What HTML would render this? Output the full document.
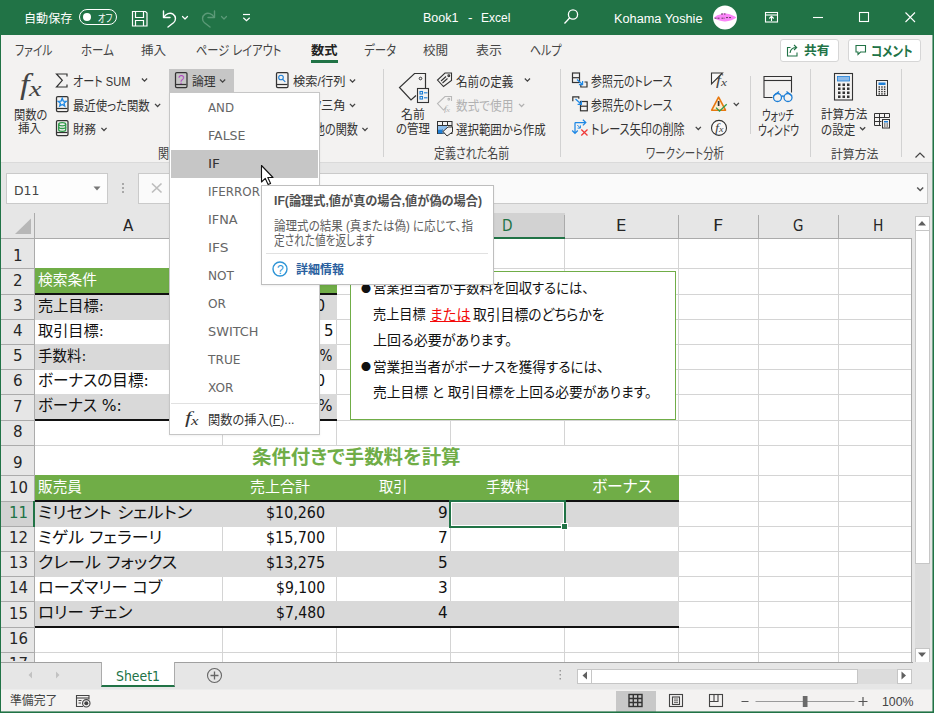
<!DOCTYPE html>
<html lang="ja"><head><meta charset="utf-8"><title>Book1 - Excel</title>
<style>
html,body{margin:0;padding:0}
body{width:934px;height:713px;position:relative;overflow:hidden;background:#e6e6e6;font-family:"Liberation Sans","Noto Sans CJK JP",sans-serif;font-size:12px;color:#262626}
.t{position:absolute;height:20px;line-height:20px;white-space:nowrap;font-feature-settings:"palt";font-kerning:normal}
.t span{display:inline-block;transform-origin:0 50%;white-space:nowrap}
.L{position:absolute;left:0;top:0;pointer-events:none;overflow:visible}
u{text-decoration:underline}
</style></head>
<body>
<div style="position:absolute;left:0px;top:0px;width:934px;height:35px;background:#217346;"></div>
<div style="position:absolute;left:0px;top:35px;width:934px;height:127px;background:#f3f2f1;"></div>
<div style="position:absolute;left:0px;top:162px;width:934px;height:1px;background:#dadada;"></div>
<div class="t" style="left:24.0px;top:8.8px;font-size:12.5px;color:#fff;font-family:'Liberation Sans','Noto Sans CJK JP',sans-serif;"><span id="t0" style="--w:48.30;transform:scaleX(0.9657)">自動保存</span></div>
<div style="position:absolute;left:79px;top:9px;width:36px;height:14px;border:1px solid #fff;border-radius:9px"></div>
<div style="position:absolute;left:83px;top:13px;width:8px;height:8px;border-radius:50%;background:#fff"></div>
<div class="t" style="left:98.0px;top:8.3px;font-size:10.64px;color:#fff;font-family:'Liberation Sans','Noto Sans CJK JP',sans-serif;"><span id="t1" style="--w:14.30;transform:scaleX(0.7665)">オフ</span></div>
<div class="t" style="left:423.3px;top:7.9px;font-size:12.5px;color:#fff;font-family:'Liberation Sans','Noto Sans CJK JP',sans-serif;"><span id="t2" style="--w:35.50;transform:scaleX(1.0013)">Book1</span></div>
<div class="t" style="left:468.3px;top:7.9px;font-size:12.5px;color:#fff;font-family:'Liberation Sans','Noto Sans CJK JP',sans-serif;"><span id="t3" style="--w:4.50;transform:scaleX(1.0787)">-</span></div>
<div class="t" style="left:480.5px;top:7.9px;font-size:12.5px;color:#fff;font-family:'Liberation Sans','Noto Sans CJK JP',sans-serif;"><span id="t4" style="--w:29.30;transform:scaleX(0.9582)">Excel</span></div>
<div class="t" style="left:613.5px;top:9.0px;font-size:12.5px;color:#fff;font-family:'Liberation Sans','Noto Sans CJK JP',sans-serif;"><span id="t5" style="--w:88.50;transform:scaleX(1.0185)">Kohama Yoshie</span></div>
<svg class="L" width="934" height="713" viewBox="0 0 934 713">
<g fill="none" stroke="#fff" stroke-width="1.2"><path d="M132.5 11.5h13l1.5 1.5v13h-14.5z"/><path d="M135.5 11.5v6h8v-6"/><path d="M135.5 26v-5.5h8v5.5"/></g>
<g fill="none" stroke="#fff" stroke-width="1.4" stroke-linecap="round" stroke-linejoin="round"><path d="M163.5 11v6.5h6.500"/><path d="M163.8 17.3c2-3.600 6.200-5.200 9.200-3.200 3.200 2.200 3.200 6.300 0.500 8.700l-5.500 4.200"/><path d="M182.5 16.500l2.500 2.500 2.500-2.500" stroke-width="1.2"/></g>
<g fill="none" stroke="#5c9a78" stroke-width="1.4" stroke-linecap="round" stroke-linejoin="round"><path d="M214.500 11v6.500h-6.500"/><path d="M214.200 17.300c-2-3.600-6.200-5.200-9.200-3.200-3.200 2.200-3.200 6.300-0.500 8.700l5.500 4.200"/><path d="M221.500 16.500l2.500 2.500 2.500-2.500" stroke-width="1.200"/></g>
<g fill="none" stroke="#fff" stroke-width="1.2"><path d="M243 14.500h7"/><path d="M243.300 17.800l3.200 3 3.200-3"/></g>
<g fill="none" stroke="#fff" stroke-width="1.3"><circle cx="573" cy="14.500" r="4.600"/><path d="M569.800 17.800l-5.300 5.700"/></g>
<circle cx="725" cy="17.500" r="12" fill="#fff"/><path d="M714 17.800c2-2.200 4.500-3.300 7-3.600 1.500-1.200 4.500-1.400 6.500-.4 3 .6 6.500 1.800 9 3.800-3 2.400-7.500 4-12 3.800-4-.2-8-1.600-10.500-3.600z" fill="#fb84f8"/><path d="M714.500 18.200h5.500m1.500 0h3.500m1-.6h5m-10-3.600h4.500" stroke="#333" stroke-width="0.800" stroke-dasharray="2 1"/>
<g fill="none" stroke="#fff" stroke-width="1.100"><rect x="765.500" y="12.500" width="12" height="9.500"/><path d="M765.500 15h12"/><path d="M771.500 21v-4.500m-2.200 2l2.200-2.200 2.200 2.200"/></g>
<g fill="none" stroke="#fff" stroke-width="1.100"><path d="M813 17.500h10"/><rect x="859.500" y="12.500" width="9" height="9"/><path d="M905.500 12.500l9.500 9.500m0-9.500l-9.500 9.500"/></g>
</svg>
<div class="t" style="left:14.5px;top:41.3px;font-size:13.44px;color:#444;font-family:'Liberation Sans','Noto Sans CJK JP',sans-serif;"><span id="t6" style="--w:37.50;transform:scaleX(0.8056)">ファイル</span></div>
<div class="t" style="left:80.7px;top:41.3px;font-size:13.44px;color:#444;font-family:'Liberation Sans','Noto Sans CJK JP',sans-serif;"><span id="t7" style="--w:32.90;transform:scaleX(0.8556)">ホーム</span></div>
<div class="t" style="left:141.4px;top:41.3px;font-size:12.0px;color:#444;font-family:'Liberation Sans','Noto Sans CJK JP',sans-serif;"><span id="t8" style="--w:25.10;transform:scaleX(1.0452)">挿入</span></div>
<div class="t" style="left:195.7px;top:41.3px;font-size:13.44px;color:#444;font-family:'Liberation Sans','Noto Sans CJK JP',sans-serif;"><span id="t9" style="--w:85.30;transform:scaleX(0.8349)">ページ レイアウト</span></div>
<div class="t" style="left:311.0px;top:40.8px;font-size:12.5px;color:#222;font-family:'Liberation Sans','Noto Sans CJK JP',sans-serif;font-weight:700;"><span id="t10" style="--w:26.50;transform:scaleX(1.0593)">数式</span></div>
<div style="position:absolute;left:311px;top:60px;width:27px;height:3px;background:#217346;"></div>
<div class="t" style="left:363.7px;top:41.3px;font-size:13.44px;color:#444;font-family:'Liberation Sans','Noto Sans CJK JP',sans-serif;"><span id="t11" style="--w:32.10;transform:scaleX(0.8546)">データ</span></div>
<div class="t" style="left:423.3px;top:41.3px;font-size:12.0px;color:#444;font-family:'Liberation Sans','Noto Sans CJK JP',sans-serif;"><span id="t12" style="--w:25.20;transform:scaleX(1.0493)">校閲</span></div>
<div class="t" style="left:476.0px;top:41.3px;font-size:12.0px;color:#444;font-family:'Liberation Sans','Noto Sans CJK JP',sans-serif;"><span id="t13" style="--w:26.00;transform:scaleX(1.0826)">表示</span></div>
<div class="t" style="left:529.5px;top:41.3px;font-size:13.44px;color:#444;font-family:'Liberation Sans','Noto Sans CJK JP',sans-serif;"><span id="t14" style="--w:31.50;transform:scaleX(0.8169)">ヘルプ</span></div>
<div style="position:absolute;left:780px;top:39px;width:57px;height:21px;background:#fff;border:1px solid #d6d6d6;border-radius:3px"></div>
<div style="position:absolute;left:848px;top:39px;width:71px;height:21px;background:#fff;border:1px solid #d6d6d6;border-radius:3px"></div>
<div class="t" style="left:803.5px;top:40.8px;font-size:12.5px;color:#217346;font-family:'Liberation Sans','Noto Sans CJK JP',sans-serif;font-weight:700;"><span id="t15" style="--w:25.50;transform:scaleX(1.0194)">共有</span></div>
<div class="t" style="left:870.5px;top:40.8px;font-size:14.0px;color:#217346;font-family:'Liberation Sans','Noto Sans CJK JP',sans-serif;font-weight:700;"><span id="t16" style="--w:41.50;transform:scaleX(0.8180)">コメント</span></div>
<svg class="L" width="934" height="713" viewBox="0 0 934 713">
<g fill="none" stroke="#217346" stroke-width="1.100"><path d="M790.500 47.500h-3v8.500h9.500v-3.500"/><path d="M790 53c.5-3.500 3-5.500 6.500-5.500m-2.500-2.500l2.700 2.500-2.700 2.500"/></g>
<g fill="none" stroke="#217346" stroke-width="1.100"><path d="M856 45.500h9.500v6.500h-5l-2.500 2.500v-2.500h-2z"/></g>
</svg>
<div class="t" style="left:19.5px;top:74.2px;font-size:30px;color:#444;font-family:'Liberation Serif','Noto Serif CJK SC',serif;font-style:italic;"><span id="t17" style="--w:9.50;transform:scaleX(1.1386)">f</span></div>
<div class="t" style="left:28.5px;top:78.8px;font-size:21px;color:#444;font-family:'Liberation Serif','Noto Serif CJK SC',serif;font-style:italic;"><span id="t18" style="--w:12.50;transform:scaleX(1.3400)">x</span></div>
<div class="t" style="left:13.5px;top:105.0px;font-size:13.0px;color:#333;font-family:'Liberation Sans','Noto Sans CJK JP',sans-serif;"><span id="t19" style="--w:33.30;transform:scaleX(0.8639)">関数の</span></div>
<div class="t" style="left:18.3px;top:119.4px;font-size:12.5px;color:#333;font-family:'Liberation Sans','Noto Sans CJK JP',sans-serif;"><span id="t20" style="--w:23.10;transform:scaleX(0.9234)">挿入</span></div>
<div class="t" style="left:73.2px;top:71.8px;font-size:13.25px;color:#333;font-family:'Liberation Sans','Noto Sans CJK JP',sans-serif;"><span id="t21" style="--w:57.40;transform:scaleX(0.8368)">オート SUM</span></div>
<div class="t" style="left:73.2px;top:96.2px;font-size:12.93px;color:#333;font-family:'Liberation Sans','Noto Sans CJK JP',sans-serif;"><span id="t22" style="--w:76.70;transform:scaleX(0.8792)">最近使った関数</span></div>
<div class="t" style="left:73.2px;top:120.2px;font-size:12.5px;color:#333;font-family:'Liberation Sans','Noto Sans CJK JP',sans-serif;"><span id="t23" style="--w:23.10;transform:scaleX(0.9234)">財務</span></div>
<div style="position:absolute;left:169px;top:69px;width:65px;height:23px;background:#c6c6c6;"></div>
<div class="t" style="left:191.8px;top:71.8px;font-size:12.5px;color:#333;font-family:'Liberation Sans','Noto Sans CJK JP',sans-serif;"><span id="t24" style="--w:23.70;transform:scaleX(0.9474)">論理</span></div>
<div class="t" style="left:292.5px;top:71.8px;font-size:12.5px;color:#333;font-family:'Liberation Sans','Noto Sans CJK JP',sans-serif;"><span id="t25" style="--w:52.50;transform:scaleX(0.9816)">検索/行列</span></div>
<div class="t" style="left:292.5px;top:96.2px;font-size:12.5px;color:#333;font-family:'Liberation Sans','Noto Sans CJK JP',sans-serif;"><span id="t26" style="--w:52.50;transform:scaleX(0.9816)">数学/三角</span></div>
<div class="t" style="left:292.5px;top:120.2px;font-size:13.25px;color:#333;font-family:'Liberation Sans','Noto Sans CJK JP',sans-serif;"><span id="t27" style="--w:65.00;transform:scaleX(0.8413)">その他の関数</span></div>
<div class="t" style="left:191.8px;top:96.2px;font-size:12.5px;color:#333;font-family:'Liberation Sans','Noto Sans CJK JP',sans-serif;"><span id="t28" style="--w:59.20;transform:scaleX(0.9470)">文字列操作</span></div>
<div class="t" style="left:191.8px;top:120.2px;font-size:12.5px;color:#333;font-family:'Liberation Sans','Noto Sans CJK JP',sans-serif;"><span id="t29" style="--w:52.20;transform:scaleX(0.9760)">日付/時刻</span></div>
<div class="t" style="left:158.0px;top:144.4px;font-size:13.57px;color:#444;font-family:'Liberation Sans','Noto Sans CJK JP',sans-serif;"><span id="t30" style="--w:70.00;transform:scaleX(0.8184)">関数ライブラリ</span></div>
<div class="t" style="left:400.8px;top:105.0px;font-size:12.5px;color:#333;font-family:'Liberation Sans','Noto Sans CJK JP',sans-serif;"><span id="t31" style="--w:23.90;transform:scaleX(0.9554)">名前</span></div>
<div class="t" style="left:395.8px;top:119.4px;font-size:13.0px;color:#333;font-family:'Liberation Sans','Noto Sans CJK JP',sans-serif;"><span id="t32" style="--w:33.90;transform:scaleX(0.8794)">の管理</span></div>
<div class="t" style="left:456.0px;top:71.8px;font-size:12.8px;color:#333;font-family:'Liberation Sans','Noto Sans CJK JP',sans-serif;"><span id="t33" style="--w:57.30;transform:scaleX(0.9019)">名前の定義</span></div>
<div class="t" style="left:456.0px;top:96.2px;font-size:12.8px;color:#b1b1b1;font-family:'Liberation Sans','Noto Sans CJK JP',sans-serif;"><span id="t34" style="--w:57.30;transform:scaleX(0.9093)">数式で使用</span></div>
<div class="t" style="left:456.0px;top:120.2px;font-size:12.88px;color:#333;font-family:'Liberation Sans','Noto Sans CJK JP',sans-serif;"><span id="t35" style="--w:89.70;transform:scaleX(0.8891)">選択範囲から作成</span></div>
<div class="t" style="left:434.3px;top:144.4px;font-size:13.14px;color:#444;font-family:'Liberation Sans','Noto Sans CJK JP',sans-serif;"><span id="t36" style="--w:75.20;transform:scaleX(0.8369)">定義された名前</span></div>
<div class="t" style="left:591.2px;top:71.8px;font-size:13.44px;color:#333;font-family:'Liberation Sans','Noto Sans CJK JP',sans-serif;"><span id="t37" style="--w:81.50;transform:scaleX(0.8141)">参照元のトレース</span></div>
<div class="t" style="left:591.2px;top:96.2px;font-size:13.44px;color:#333;font-family:'Liberation Sans','Noto Sans CJK JP',sans-serif;"><span id="t38" style="--w:81.50;transform:scaleX(0.8141)">参照先のトレース</span></div>
<div class="t" style="left:591.2px;top:120.2px;font-size:13.33px;color:#333;font-family:'Liberation Sans','Noto Sans CJK JP',sans-serif;"><span id="t39" style="--w:93.70;transform:scaleX(0.8321)">トレース矢印の削除</span></div>
<div class="t" style="left:645.7px;top:144.4px;font-size:13.63px;color:#444;font-family:'Liberation Sans','Noto Sans CJK JP',sans-serif;"><span id="t40" style="--w:78.10;transform:scaleX(0.7691)">ワークシート分析</span></div>
<div class="t" style="left:762.4px;top:105.0px;font-size:14.0px;color:#333;font-family:'Liberation Sans','Noto Sans CJK JP',sans-serif;"><span id="t41" style="--w:32.00;transform:scaleX(0.6755)">ウォッチ</span></div>
<div class="t" style="left:757.7px;top:119.5px;font-size:14.0px;color:#333;font-family:'Liberation Sans','Noto Sans CJK JP',sans-serif;"><span id="t42" style="--w:40.90;transform:scaleX(0.6867)">ウィンドウ</span></div>
<div class="t" style="left:820.6px;top:105.0px;font-size:12.5px;color:#333;font-family:'Liberation Sans','Noto Sans CJK JP',sans-serif;"><span id="t43" style="--w:46.50;transform:scaleX(0.9297)">計算方法</span></div>
<div class="t" style="left:821.0px;top:119.5px;font-size:13.0px;color:#333;font-family:'Liberation Sans','Noto Sans CJK JP',sans-serif;"><span id="t44" style="--w:34.30;transform:scaleX(0.8898)">の設定</span></div>
<div class="t" style="left:831.4px;top:144.5px;font-size:12.5px;color:#444;font-family:'Liberation Sans','Noto Sans CJK JP',sans-serif;"><span id="t45" style="--w:47.40;transform:scaleX(0.9477)">計算方法</span></div>
<div style="position:absolute;left:383px;top:69px;width:1px;height:88px;background:#d2d2d2;"></div>
<div style="position:absolute;left:560px;top:69px;width:1px;height:88px;background:#d2d2d2;"></div>
<div style="position:absolute;left:750px;top:76px;width:1px;height:58px;background:#d2d2d2;"></div>
<div style="position:absolute;left:809.5px;top:69px;width:1px;height:88px;background:#d2d2d2;"></div>
<div style="position:absolute;left:900.5px;top:69px;width:1px;height:88px;background:#d2d2d2;"></div>
<svg class="L" width="934" height="713" viewBox="0 0 934 713">
<path d="M141.9 78.5l2.600 2.600 2.600-2.600" fill="none" stroke="#444" stroke-width="1.250"/>
<path d="M155.0 103.9l2.600 2.600 2.600-2.600" fill="none" stroke="#444" stroke-width="1.250"/>
<path d="M101.4 127.9l2.600 2.600 2.600-2.600" fill="none" stroke="#444" stroke-width="1.250"/>
<path d="M220.0 79.5l2.600 2.600 2.600-2.600" fill="none" stroke="#444" stroke-width="1.250"/>
<path d="M349.9 79.5l2.600 2.600 2.600-2.600" fill="none" stroke="#444" stroke-width="1.250"/>
<path d="M349.9 103.9l2.600 2.600 2.600-2.600" fill="none" stroke="#444" stroke-width="1.250"/>
<path d="M362.4 127.9l2.600 2.600 2.600-2.600" fill="none" stroke="#444" stroke-width="1.250"/>
<path d="M524.8 78.5l2.600 2.600 2.600-2.600" fill="none" stroke="#444" stroke-width="1.250"/>
<path d="M695.7 126.9l2.600 2.600 2.600-2.600" fill="none" stroke="#444" stroke-width="1.250"/>
<path d="M733.7 102.9l2.600 2.600 2.600-2.600" fill="none" stroke="#444" stroke-width="1.250"/>
<path d="M860.0 127.2l2.600 2.600 2.600-2.600" fill="none" stroke="#444" stroke-width="1.250"/>
<path d="M519.0 103.9l2.600 2.600 2.600-2.600" fill="none" stroke="#b1b1b1" stroke-width="1.250"/>
<path d="M915.500 157.500l4.500-4.500 4.500 4.500" fill="none" stroke="#444" stroke-width="1.200"/>
<path d="M67 76.500v-2.500h-10.500l5.800 6.300-5.800 6.700h10.500v-2.500" fill="none" stroke="#333" stroke-width="1.200"/>
<rect x="56.5" y="96.5" width="11.500" height="15" rx="1.300" fill="none" stroke="#333" stroke-width="1.250"/><path d="M57.0 108.5h10.500" stroke="#333" stroke-width="1.200"/>
<path d="M62.20 98.30L63.32 101.06L66.29 101.27L64.01 103.19L64.73 106.08L62.20 104.50L59.67 106.08L60.39 103.19L58.11 101.27L61.08 101.06z" fill="none" stroke="#1e88e5" stroke-width="1.300"/>
<rect x="56.5" y="120.5" width="11.500" height="15" rx="1.300" fill="none" stroke="#333" stroke-width="1.250"/><path d="M57.0 132.5h10.500" stroke="#333" stroke-width="1.200"/>
<g fill="none" stroke="#2f9a4a" stroke-width="1.300"><ellipse cx="62.200" cy="124.200" rx="3.500" ry="1.600"/><path d="M58.700 124.200v5.600c0 2.100 7 2.100 7 0v-5.600"/><path d="M58.700 127c0 2 7 2 7 0"/></g>
<rect x="175.5" y="72.5" width="11.500" height="15" rx="1.300" fill="none" stroke="#333" stroke-width="1.250"/><path d="M176.0 84.5h10.500" stroke="#333" stroke-width="1.200"/>
<rect x="276.5" y="72.5" width="11.500" height="15" rx="1.300" fill="none" stroke="#333" stroke-width="1.250"/><path d="M277.0 84.5h10.500" stroke="#333" stroke-width="1.200"/>
<g fill="none" stroke="#1e7fd6" stroke-width="1.100"><circle cx="281" cy="77.500" r="2.300"/><path d="M282.700 79.300l2.600 2.600"/></g>
<rect x="175.5" y="96.5" width="11.500" height="15" rx="1.300" fill="none" stroke="#333" stroke-width="1.250"/><path d="M176.0 108.5h10.500" stroke="#333" stroke-width="1.200"/>
<rect x="175.5" y="120.5" width="11.500" height="15" rx="1.300" fill="none" stroke="#333" stroke-width="1.250"/><path d="M176.0 132.5h10.500" stroke="#333" stroke-width="1.200"/>
<rect x="276.5" y="96.5" width="11.500" height="15" rx="1.300" fill="none" stroke="#333" stroke-width="1.250"/><path d="M277.0 108.5h10.500" stroke="#333" stroke-width="1.200"/>
<rect x="276.5" y="120.5" width="11.500" height="15" rx="1.300" fill="none" stroke="#333" stroke-width="1.250"/><path d="M277.0 132.5h10.500" stroke="#333" stroke-width="1.200"/>
</svg>
<div class="t" style="left:178.0px;top:69.8px;font-size:13.0px;color:#b146c2;font-family:'Liberation Sans','Noto Sans CJK JP',sans-serif;"><span id="t46" style="--w:6.50;transform:scaleX(0.8985)">?</span></div>
<svg class="L" width="934" height="713" viewBox="0 0 934 713">
<path d="M425.500 96v-22.500h-11l-15 14 11.500 12.500 5-4.500" fill="none" stroke="#333" stroke-width="1.200"/><circle cx="420.500" cy="78.500" r="1.300" fill="none" stroke="#333" stroke-width="1"/>
<rect x="417.500" y="88.500" width="11" height="14" fill="#f3f2f1" stroke="#333" stroke-width="1.100"/>
<g fill="none" stroke="#1e7fd6" stroke-width="1.100"><rect x="420" y="91.500" width="2.500" height="2.500"/><path d="M424 92.800h3.500"/><rect x="420" y="96.500" width="2.500" height="2.500"/><path d="M424 97.800h3.500"/></g>
<g fill="none" stroke="#333" stroke-width="1.100"><path d="M451.500 80.500v-7.500h-6.500l-7.500 7 6 6.500z"/><circle cx="448.800" cy="75.800" r="0.900"/><path d="M441 81l5-4.500m-3.500 6.500l5-4.500"/></g>
<g fill="none" stroke="#b8b8b8" stroke-width="1.100"><path d="M451.500 101v-4.500h-6.500l-7.500 7 6 6.500 2.500-2.300"/><circle cx="448.800" cy="99.300" r="0.900"/></g>
<g fill="none" stroke="#333" stroke-width="1"><rect x="437.500" y="121.500" width="14.500" height="12"/><path d="M437.500 125.500h14.500m-9.500-4v12m5-12v4"/></g><rect x="438" y="126" width="9" height="3.500" fill="#8dbdeb"/><rect x="438" y="129.500" width="4.500" height="4" fill="#1e7fd6"/><rect x="442.500" y="129.500" width="4.500" height="4" fill="#8dbdeb"/>
<path d="M452.500 132v-5h-4.500l-5 4.500 4 4.500z" fill="#f3f2f1" stroke="#333" stroke-width="1"/>
<g fill="none" stroke="#333" stroke-width="1.200"><rect x="572.500" y="73" width="7" height="9.500"/><path d="M572.500 77.700h7"/><path d="M580.800 85v2h6.200v-5h-2.500"/></g><g fill="none" stroke="#1e88e5" stroke-width="1.200"><path d="M577 79.500l5.500 5m-3.600.2h3.700v-3.600"/></g>
<g fill="none" stroke="#333" stroke-width="1.200"><rect x="580.500" y="101.500" width="6.800" height="9.300"/><path d="M580.500 106.200h6.800"/><path d="M572.800 101.300v-4.500h6v2"/></g><g fill="none" stroke="#1e88e5" stroke-width="1.200"><path d="M575.500 99l5.800 5.200m-3.700.2h3.800v-3.600"/></g>
<g fill="none" stroke="#1e88e5" stroke-width="1.250"><path d="M575 122.600v10.700m-2.800-2.800l2.800 2.900 2.800-2.900"/><path d="M575 122.600h10.700m-2.800-2.800l2.900 2.800-2.900 2.800"/><path d="M577.300 125l3 3m-2.700.1h2.800v-2.700" stroke-width="1"/></g><path d="M581.300 129.500l6.200 6m0-6l-6.200 6" stroke="#f03a3a" stroke-width="1.300" fill="none"/>
<path d="M711.500 84v-11h11z" fill="#fafafa" stroke="#333" stroke-width="1.100"/>
<path d="M718.600 97.200l6.900 13h-13.800z" fill="#fdebd0" stroke="#e8780e" stroke-width="1.600" stroke-linejoin="round"/><path d="M718.600 101v5" stroke="#333" stroke-width="1.700"/><path d="M716 107.600l3.500 3.500 7.200-6.800" fill="none" stroke="#2f9a4a" stroke-width="1.300"/>
<circle cx="719" cy="127.900" r="7.500" fill="#fafafa" stroke="#333" stroke-width="1.100"/>
<path d="M772.500 97.500h-8.500v-21h27.500v16" fill="none" stroke="#333" stroke-width="1.100"/><path d="M764 80.500h27.500" stroke="#333" stroke-width="1.100"/>
<g fill="none" stroke="#1e7fd6" stroke-width="1.300"><circle cx="777.500" cy="97.500" r="4"/><circle cx="788" cy="97.500" r="4"/><path d="M781.500 96.500q1.300-1 2.500 0M773.500 96l5.500-4.500m13 4.500l-5.500-4.500"/></g>
<rect x="834.500" y="73.500" width="18" height="26.500" fill="none" stroke="#333" stroke-width="1.100"/><rect x="837.500" y="76.500" width="12" height="4.500" fill="#8ebbe8" stroke="#1e7fd6" stroke-width=".8"/>
<rect x="838.0" y="83.5" width="2.500" height="2.500" fill="#333"/>
<rect x="842.5" y="83.5" width="2.500" height="2.500" fill="#333"/>
<rect x="847.0" y="83.5" width="2.500" height="2.500" fill="#333"/>
<rect x="838.0" y="87.5" width="2.500" height="2.500" fill="#333"/>
<rect x="842.5" y="87.5" width="2.500" height="2.500" fill="#333"/>
<rect x="847.0" y="87.5" width="2.500" height="2.500" fill="#333"/>
<rect x="838.0" y="91.5" width="2.500" height="2.500" fill="#333"/>
<rect x="842.5" y="91.5" width="2.500" height="2.500" fill="#333"/>
<rect x="847.0" y="91.5" width="2.500" height="2.500" fill="#333"/>
<rect x="838.0" y="95.5" width="2.500" height="2.500" fill="#333"/>
<rect x="842.5" y="95.5" width="2.500" height="2.500" fill="#333"/>
<rect x="847.0" y="95.5" width="2.500" height="2.500" fill="#333"/>
<rect x="876.500" y="80.500" width="11" height="15" fill="none" stroke="#333" stroke-width="1"/><rect x="878.500" y="82.500" width="7" height="2.500" fill="#1e7fd6"/>
<rect x="878.5" y="86.3" width="1.500" height="1.400" fill="#333"/>
<rect x="881.2" y="86.3" width="1.500" height="1.400" fill="#333"/>
<rect x="883.9" y="86.3" width="1.500" height="1.400" fill="#333"/>
<rect x="878.5" y="88.6" width="1.500" height="1.400" fill="#333"/>
<rect x="881.2" y="88.6" width="1.500" height="1.400" fill="#333"/>
<rect x="883.9" y="88.6" width="1.500" height="1.400" fill="#333"/>
<rect x="878.5" y="90.9" width="1.500" height="1.400" fill="#333"/>
<rect x="881.2" y="90.9" width="1.500" height="1.400" fill="#333"/>
<rect x="883.9" y="90.9" width="1.500" height="1.400" fill="#333"/>
<rect x="878.5" y="93.2" width="1.500" height="1.400" fill="#333"/>
<rect x="881.2" y="93.2" width="1.500" height="1.400" fill="#333"/>
<rect x="883.9" y="93.2" width="1.500" height="1.400" fill="#333"/>
<g fill="none" stroke="#333" stroke-width="1"><path d="M881 125.500h-6.500v-12h15v4"/><path d="M874.500 117.500h15m-15 4h7m-2-8v12m5-12v4"/><rect x="882.500" y="119.500" width="7" height="8.500" fill="#f3f2f1"/></g><rect x="884" y="121" width="4" height="1.500" fill="#1e7fd6"/><path d="M884 124h4m-4 2h4" stroke="#333" stroke-width="1" stroke-dasharray="1 .5"/>
</svg>
<div class="t" style="left:716.3px;top:70.3px;font-size:15px;color:#444;font-family:'Liberation Serif','Noto Serif CJK SC',serif;font-style:italic;"><span id="t47" style="--w:5.00;transform:scaleX(1.1985)">f</span></div>
<div class="t" style="left:721.0px;top:72.5px;font-size:10.5px;color:#444;font-family:'Liberation Serif','Noto Serif CJK SC',serif;font-style:italic;"><span id="t48" style="--w:6.00;transform:scaleX(1.2843)">x</span></div>
<div class="t" style="left:715.3px;top:117.6px;font-size:11.5px;color:#444;font-family:'Liberation Serif','Noto Serif CJK SC',serif;font-style:italic;"><span id="t49" style="--w:4.00;transform:scaleX(1.2488)">f</span></div>
<div class="t" style="left:718.8px;top:119.3px;font-size:8.5px;color:#444;font-family:'Liberation Serif','Noto Serif CJK SC',serif;font-style:italic;"><span id="t50" style="--w:4.50;transform:scaleX(1.1901)">x</span></div>
<div class="t" style="left:443.5px;top:99.0px;font-size:8px;color:#b8b8b8;font-family:'Liberation Serif','Noto Serif CJK SC',serif;font-style:italic;"><span id="t51" style="--w:3.00;transform:scaleX(1.3427)">f</span></div>
<div class="t" style="left:446.0px;top:100.0px;font-size:7px;color:#b8b8b8;font-family:'Liberation Serif','Noto Serif CJK SC',serif;font-style:italic;"><span id="t52" style="--w:4.00;transform:scaleX(1.2864)">x</span></div>
<div style="position:absolute;left:6px;top:173px;width:100px;height:29px;background:#fdfdfd;border:1px solid #cacaca"></div>
<div style="position:absolute;left:138px;top:173px;width:788px;height:29px;background:#fafafa;border:1px solid #cacaca"></div>
<div class="t" style="left:13.5px;top:181.0px;font-size:13.12px;color:#444;font-family:'DejaVu Sans','Noto Sans CJK JP',sans-serif;"><span id="t53" style="--w:25.50;transform:scaleX(0.9522)">D11</span></div>
<svg class="L" width="934" height="713" viewBox="0 0 934 713">
<path d="M93.500 186.500h7l-3.500 4z" fill="#777"/>
<g fill="#a8a8a8"><rect x="122" y="183" width="2" height="2"/><rect x="122" y="187" width="2" height="2"/><rect x="122" y="191" width="2" height="2"/></g>
<path d="M152 183.500l9.500 9m0-9l-9.500 9" stroke="#bdbdbd" stroke-width="1.700" fill="none"/>
<path d="M176 188.500l3.500 3.500 6-8" stroke="#b9b9b9" stroke-width="1.500" fill="none"/>
<path d="M917.200 187.500l3 3 3-3" stroke="#555" stroke-width="1.500" fill="none"/>
</svg>
<div class="t" style="left:200.0px;top:179.0px;font-size:15px;color:#666;font-family:'Liberation Serif','Noto Serif CJK SC',serif;font-style:italic;"><span id="t54" style="--w:5.00;transform:scaleX(1.1985)">f</span></div>
<div class="t" style="left:205.0px;top:181.0px;font-size:11px;color:#666;font-family:'Liberation Serif','Noto Serif CJK SC',serif;font-style:italic;"><span id="t55" style="--w:6.00;transform:scaleX(1.2268)">x</span></div>
<div style="position:absolute;left:1px;top:213px;width:911px;height:449px;background:#e6e6e6;"></div>
<div style="position:absolute;left:35px;top:239px;width:877px;height:423px;background:#fff;"></div>
<div style="position:absolute;left:35px;top:269px;width:302px;height:25px;background:#70ad47;"></div>
<div style="position:absolute;left:35px;top:295px;width:302px;height:25px;background:#d9d9d9;"></div>
<div style="position:absolute;left:35px;top:345px;width:302px;height:25px;background:#d9d9d9;"></div>
<div style="position:absolute;left:35px;top:395px;width:302px;height:26px;background:#d9d9d9;"></div>
<div style="position:absolute;left:35px;top:476px;width:644px;height:25px;background:#70ad47;"></div>
<div style="position:absolute;left:35px;top:502px;width:644px;height:25px;background:#d9d9d9;"></div>
<div style="position:absolute;left:35px;top:552px;width:644px;height:25px;background:#d9d9d9;"></div>
<div style="position:absolute;left:35px;top:602px;width:644px;height:26px;background:#d9d9d9;"></div>
<div style="position:absolute;left:451px;top:213px;width:114px;height:25px;background:#d2d2d2;"></div>
<div style="position:absolute;left:1px;top:502px;width:33px;height:24px;background:#d2d2d2;"></div>
<svg class="L" width="934" height="713" viewBox="0 0 934 713">
<rect x="35" y="268" width="877" height="1" fill="#d4d4d4"/><rect x="35" y="294" width="877" height="1" fill="#d4d4d4"/><rect x="35" y="319" width="877" height="1" fill="#d4d4d4"/><rect x="35" y="344" width="877" height="1" fill="#d4d4d4"/><rect x="35" y="369" width="877" height="1" fill="#d4d4d4"/><rect x="35" y="394" width="877" height="1" fill="#d4d4d4"/><rect x="35" y="420" width="877" height="1" fill="#d4d4d4"/><rect x="35" y="445" width="877" height="1" fill="#d4d4d4"/><rect x="35" y="475" width="877" height="1" fill="#d4d4d4"/><rect x="35" y="501" width="877" height="1" fill="#d4d4d4"/><rect x="35" y="526" width="877" height="1" fill="#d4d4d4"/><rect x="35" y="551" width="877" height="1" fill="#d4d4d4"/><rect x="35" y="576" width="877" height="1" fill="#d4d4d4"/><rect x="35" y="601" width="877" height="1" fill="#d4d4d4"/><rect x="35" y="627" width="877" height="1" fill="#d4d4d4"/><rect x="35" y="652" width="877" height="1" fill="#d4d4d4"/><rect x="222" y="239" width="1" height="423" fill="#d4d4d4"/><rect x="336" y="239" width="1" height="423" fill="#d4d4d4"/><rect x="450" y="239" width="1" height="423" fill="#d4d4d4"/><rect x="564" y="239" width="1" height="423" fill="#d4d4d4"/><rect x="678" y="239" width="1" height="423" fill="#d4d4d4"/><rect x="758" y="239" width="1" height="423" fill="#d4d4d4"/><rect x="838" y="239" width="1" height="423" fill="#d4d4d4"/>
</svg>
<div style="position:absolute;left:35px;top:268px;width:302px;height:26px;background:#70ad47;"></div>
<div style="position:absolute;left:35px;top:294px;width:302px;height:26px;background:#d9d9d9;"></div>
<div style="position:absolute;left:35px;top:344px;width:302px;height:26px;background:#d9d9d9;"></div>
<div style="position:absolute;left:35px;top:394px;width:302px;height:27px;background:#d9d9d9;"></div>
<div style="position:absolute;left:35px;top:475px;width:644px;height:26px;background:#70ad47;"></div>
<div style="position:absolute;left:35px;top:501px;width:644px;height:26px;background:#d9d9d9;"></div>
<div style="position:absolute;left:35px;top:551px;width:644px;height:26px;background:#d9d9d9;"></div>
<div style="position:absolute;left:35px;top:601px;width:644px;height:27px;background:#d9d9d9;"></div>
<svg class="L" width="934" height="713" viewBox="0 0 934 713">
<rect x="1" y="238" width="911" height="1" fill="#ababab"/><rect x="34" y="213" width="1" height="449" fill="#ababab"/><rect x="222" y="215" width="1" height="23" fill="#ababab"/><rect x="336" y="215" width="1" height="23" fill="#ababab"/><rect x="450" y="215" width="1" height="23" fill="#ababab"/><rect x="564" y="215" width="1" height="23" fill="#ababab"/><rect x="678" y="215" width="1" height="23" fill="#ababab"/><rect x="758" y="215" width="1" height="23" fill="#ababab"/><rect x="838" y="215" width="1" height="23" fill="#ababab"/><rect x="1" y="268" width="33" height="1" fill="#ababab"/><rect x="1" y="294" width="33" height="1" fill="#ababab"/><rect x="1" y="319" width="33" height="1" fill="#ababab"/><rect x="1" y="344" width="33" height="1" fill="#ababab"/><rect x="1" y="369" width="33" height="1" fill="#ababab"/><rect x="1" y="394" width="33" height="1" fill="#ababab"/><rect x="1" y="420" width="33" height="1" fill="#ababab"/><rect x="1" y="445" width="33" height="1" fill="#ababab"/><rect x="1" y="475" width="33" height="1" fill="#ababab"/><rect x="1" y="501" width="33" height="1" fill="#ababab"/><rect x="1" y="526" width="33" height="1" fill="#ababab"/><rect x="1" y="551" width="33" height="1" fill="#ababab"/><rect x="1" y="576" width="33" height="1" fill="#ababab"/><rect x="1" y="601" width="33" height="1" fill="#ababab"/><rect x="1" y="627" width="33" height="1" fill="#ababab"/><rect x="1" y="652" width="33" height="1" fill="#ababab"/><rect x="911" y="239" width="1" height="423" fill="#ababab"/><path d="M31 218.500v15.500h-16z" fill="#b7b7b7"/><rect x="35" y="293" width="302" height="2" fill="#111"/><rect x="35" y="419" width="302" height="2" fill="#111"/><rect x="35" y="500" width="644" height="2" fill="#111"/><rect x="35" y="626" width="644" height="2" fill="#111"/><rect x="451" y="237" width="114" height="2" fill="#217346"/><rect x="33" y="501" width="2" height="26" fill="#217346"/><rect x="450" y="501" width="115" height="26" fill="none" stroke="#217346" stroke-width="2"/><rect x="451.500" y="502.500" width="112" height="23" fill="none" stroke="#fff" stroke-width="1"/><rect x="561.500" y="523.500" width="6" height="6" fill="#217346" stroke="#fff" stroke-width="1"/>
</svg>
<div class="t" style="left:123.3px;top:215.7px;font-size:15.23px;color:#262626;font-family:'DejaVu Sans','Noto Sans CJK JP',sans-serif;"><span id="t56" style="--w:10.40;transform:scaleX(0.9979)">A</span></div>
<div class="t" style="left:616.3px;top:215.7px;font-size:15.23px;color:#262626;font-family:'DejaVu Sans','Noto Sans CJK JP',sans-serif;"><span id="t57" style="--w:10.40;transform:scaleX(1.0805)">E</span></div>
<div class="t" style="left:713.3px;top:215.7px;font-size:15.23px;color:#262626;font-family:'DejaVu Sans','Noto Sans CJK JP',sans-serif;"><span id="t58" style="--w:10.40;transform:scaleX(1.1865)">F</span></div>
<div class="t" style="left:793.3px;top:215.7px;font-size:15.23px;color:#262626;font-family:'DejaVu Sans','Noto Sans CJK JP',sans-serif;"><span id="t59" style="--w:10.40;transform:scaleX(0.8816)">G</span></div>
<div class="t" style="left:872.8px;top:215.7px;font-size:15.23px;color:#262626;font-family:'DejaVu Sans','Noto Sans CJK JP',sans-serif;"><span id="t60" style="--w:10.40;transform:scaleX(0.9080)">H</span></div>
<div class="t" style="left:502.0px;top:215.7px;font-size:15.23px;color:#217346;font-family:'DejaVu Sans','Noto Sans CJK JP',sans-serif;"><span id="t61" style="--w:10.50;transform:scaleX(0.8960)">D</span></div>
<div class="t" style="left:12.7px;top:246.2px;font-size:15.23px;color:#262626;font-family:'DejaVu Sans','Noto Sans CJK JP',sans-serif;"><span id="t62" style="--w:9.60;transform:scaleX(0.9910)">1</span></div>
<div class="t" style="left:12.7px;top:270.7px;font-size:15.23px;color:#262626;font-family:'DejaVu Sans','Noto Sans CJK JP',sans-serif;"><span id="t63" style="--w:9.60;transform:scaleX(0.9910)">2</span></div>
<div class="t" style="left:12.7px;top:296.2px;font-size:15.23px;color:#262626;font-family:'DejaVu Sans','Noto Sans CJK JP',sans-serif;"><span id="t64" style="--w:9.60;transform:scaleX(0.9910)">3</span></div>
<div class="t" style="left:12.7px;top:321.2px;font-size:15.23px;color:#262626;font-family:'DejaVu Sans','Noto Sans CJK JP',sans-serif;"><span id="t65" style="--w:9.60;transform:scaleX(0.9910)">4</span></div>
<div class="t" style="left:12.7px;top:346.2px;font-size:15.23px;color:#262626;font-family:'DejaVu Sans','Noto Sans CJK JP',sans-serif;"><span id="t66" style="--w:9.60;transform:scaleX(0.9910)">5</span></div>
<div class="t" style="left:12.7px;top:371.2px;font-size:15.23px;color:#262626;font-family:'DejaVu Sans','Noto Sans CJK JP',sans-serif;"><span id="t67" style="--w:9.60;transform:scaleX(0.9910)">6</span></div>
<div class="t" style="left:12.7px;top:396.7px;font-size:15.23px;color:#262626;font-family:'DejaVu Sans','Noto Sans CJK JP',sans-serif;"><span id="t68" style="--w:9.60;transform:scaleX(0.9910)">7</span></div>
<div class="t" style="left:12.7px;top:422.2px;font-size:15.23px;color:#262626;font-family:'DejaVu Sans','Noto Sans CJK JP',sans-serif;"><span id="t69" style="--w:9.60;transform:scaleX(0.9910)">8</span></div>
<div class="t" style="left:12.7px;top:452.7px;font-size:15.23px;color:#262626;font-family:'DejaVu Sans','Noto Sans CJK JP',sans-serif;"><span id="t70" style="--w:9.60;transform:scaleX(0.9910)">9</span></div>
<div class="t" style="left:8.6px;top:477.7px;font-size:15.23px;color:#262626;font-family:'DejaVu Sans','Noto Sans CJK JP',sans-serif;"><span id="t71" style="--w:19.00;transform:scaleX(0.9806)">10</span></div>
<div class="t" style="left:8.6px;top:503.2px;font-size:15.23px;color:#217346;font-family:'DejaVu Sans','Noto Sans CJK JP',sans-serif;"><span id="t72" style="--w:19.00;transform:scaleX(0.9806)">11</span></div>
<div class="t" style="left:8.6px;top:528.2px;font-size:15.23px;color:#262626;font-family:'DejaVu Sans','Noto Sans CJK JP',sans-serif;"><span id="t73" style="--w:19.00;transform:scaleX(0.9806)">12</span></div>
<div class="t" style="left:8.6px;top:553.2px;font-size:15.23px;color:#262626;font-family:'DejaVu Sans','Noto Sans CJK JP',sans-serif;"><span id="t74" style="--w:19.00;transform:scaleX(0.9806)">13</span></div>
<div class="t" style="left:8.6px;top:578.2px;font-size:15.23px;color:#262626;font-family:'DejaVu Sans','Noto Sans CJK JP',sans-serif;"><span id="t75" style="--w:19.00;transform:scaleX(0.9806)">14</span></div>
<div class="t" style="left:8.6px;top:603.7px;font-size:15.23px;color:#262626;font-family:'DejaVu Sans','Noto Sans CJK JP',sans-serif;"><span id="t76" style="--w:19.00;transform:scaleX(0.9806)">15</span></div>
<div class="t" style="left:8.6px;top:629.2px;font-size:15.23px;color:#262626;font-family:'DejaVu Sans','Noto Sans CJK JP',sans-serif;"><span id="t77" style="--w:19.00;transform:scaleX(0.9806)">16</span></div>
<div style="position:absolute;left:1px;top:653px;width:33px;height:8px;overflow:hidden">
<div class="t" style="left:7.6px;top:1.2px;font-size:15.23px;color:#262626;font-family:'DejaVu Sans','Noto Sans CJK JP',sans-serif;"><span id="t78" style="--w:19.00;transform:scaleX(0.9806)">17</span></div>
</div>
<div style="position:absolute;left:35px;top:446px;width:643px;height:29px;background:#fff;"></div>
<div class="t" style="left:38.0px;top:270.3px;font-size:14.67px;color:#fff;font-family:'DejaVu Sans','Noto Sans CJK JP',sans-serif;"><span id="t79" style="--w:59.00;transform:scaleX(1.0061)">検索条件</span></div>
<div class="t" style="left:37.7px;top:295.8px;font-size:14.82px;color:#111;font-family:'DejaVu Sans','Noto Sans CJK JP',sans-serif;"><span id="t80" style="--w:65.80;transform:scaleX(1.0241)">売上目標:</span></div>
<div class="t" style="left:37.7px;top:320.8px;font-size:14.82px;color:#111;font-family:'DejaVu Sans','Noto Sans CJK JP',sans-serif;"><span id="t81" style="--w:65.80;transform:scaleX(1.0241)">取引目標:</span></div>
<div class="t" style="left:37.7px;top:345.8px;font-size:14.85px;color:#111;font-family:'DejaVu Sans','Noto Sans CJK JP',sans-serif;"><span id="t82" style="--w:48.30;transform:scaleX(0.9748)">手数料:</span></div>
<div class="t" style="left:37.7px;top:370.8px;font-size:15.86px;color:#111;font-family:'DejaVu Sans','Noto Sans CJK JP',sans-serif;"><span id="t83" style="--w:110.80;transform:scaleX(0.9833)">ボーナスの目標:</span></div>
<div class="t" style="left:37.7px;top:396.3px;font-size:16.09px;color:#111;font-family:'DejaVu Sans','Noto Sans CJK JP',sans-serif;"><span id="t84" style="--w:83.80;transform:scaleX(0.9636)">ボーナス %:</span></div>
<div class="t" style="left:266.3px;top:295.8px;font-size:15.4px;color:#111;font-family:'DejaVu Sans','Noto Sans CJK JP',sans-serif;"><span id="t85" style="--w:59.00;transform:scaleX(0.9269)">$10,000</span></div>
<div class="t" style="left:323.8px;top:320.8px;font-size:15.4px;color:#111;font-family:'DejaVu Sans','Noto Sans CJK JP',sans-serif;"><span id="t86" style="--w:9.50;transform:scaleX(0.9697)">5</span></div>
<div class="t" style="left:311.0px;top:345.8px;font-size:15.4px;color:#111;font-family:'DejaVu Sans','Noto Sans CJK JP',sans-serif;"><span id="t87" style="--w:21.50;transform:scaleX(0.8804)">3%</span></div>
<div class="t" style="left:266.3px;top:370.8px;font-size:15.4px;color:#111;font-family:'DejaVu Sans','Noto Sans CJK JP',sans-serif;"><span id="t88" style="--w:59.00;transform:scaleX(0.9269)">$12,000</span></div>
<div class="t" style="left:293.0px;top:396.3px;font-size:15.4px;color:#111;font-family:'DejaVu Sans','Noto Sans CJK JP',sans-serif;"><span id="t89" style="--w:39.50;transform:scaleX(1.0100)">1.5%</span></div>
<div class="t" style="left:251.5px;top:447.8px;font-size:19.28px;color:#70ad47;font-family:'Liberation Sans','Noto Sans CJK JP',sans-serif;font-weight:700;"><span id="t90" style="--w:208.50;transform:scaleX(1.0086)">条件付きで手数料を計算</span></div>
<div class="t" style="left:38.0px;top:477.3px;font-size:14.67px;color:#fff;font-family:'DejaVu Sans','Noto Sans CJK JP',sans-serif;"><span id="t91" style="--w:44.00;transform:scaleX(1.0004)">販売員</span></div>
<div class="t" style="left:250.0px;top:477.3px;font-size:14.67px;color:#fff;font-family:'DejaVu Sans','Noto Sans CJK JP',sans-serif;"><span id="t92" style="--w:60.00;transform:scaleX(1.0232)">売上合計</span></div>
<div class="t" style="left:379.0px;top:477.3px;font-size:14.67px;color:#fff;font-family:'DejaVu Sans','Noto Sans CJK JP',sans-serif;"><span id="t93" style="--w:28.50;transform:scaleX(0.9718)">取引</span></div>
<div class="t" style="left:486.0px;top:477.3px;font-size:14.67px;color:#fff;font-family:'DejaVu Sans','Noto Sans CJK JP',sans-serif;"><span id="t94" style="--w:43.50;transform:scaleX(0.9890)">手数料</span></div>
<div class="t" style="left:592.0px;top:477.3px;font-size:16.43px;color:#fff;font-family:'DejaVu Sans','Noto Sans CJK JP',sans-serif;"><span id="t95" style="--w:60.00;transform:scaleX(0.9605)">ボーナス</span></div>
<div class="t" style="left:38.3px;top:502.8px;font-size:16.43px;color:#111;font-family:'DejaVu Sans','Noto Sans CJK JP',sans-serif;"><span id="t96" style="--w:154.20;transform:scaleX(1.0537)">ミリセント シェルトン</span></div>
<div class="t" style="left:266.3px;top:502.8px;font-size:15.4px;color:#111;font-family:'DejaVu Sans','Noto Sans CJK JP',sans-serif;"><span id="t97" style="--w:59.00;transform:scaleX(0.9269)">$10,260</span></div>
<div class="t" style="left:437.6px;top:502.8px;font-size:15.4px;color:#111;font-family:'DejaVu Sans','Noto Sans CJK JP',sans-serif;"><span id="t98" style="--w:9.70;transform:scaleX(0.9901)">9</span></div>
<div class="t" style="left:38.3px;top:527.8px;font-size:16.43px;color:#111;font-family:'DejaVu Sans','Noto Sans CJK JP',sans-serif;"><span id="t99" style="--w:124.20;transform:scaleX(1.0260)">ミゲル フェラーリ</span></div>
<div class="t" style="left:266.3px;top:527.8px;font-size:15.4px;color:#111;font-family:'DejaVu Sans','Noto Sans CJK JP',sans-serif;"><span id="t100" style="--w:59.00;transform:scaleX(0.9269)">$15,700</span></div>
<div class="t" style="left:437.6px;top:527.8px;font-size:15.4px;color:#111;font-family:'DejaVu Sans','Noto Sans CJK JP',sans-serif;"><span id="t101" style="--w:9.70;transform:scaleX(0.9901)">7</span></div>
<div class="t" style="left:38.3px;top:552.8px;font-size:16.43px;color:#111;font-family:'DejaVu Sans','Noto Sans CJK JP',sans-serif;"><span id="t102" style="--w:139.20;transform:scaleX(1.0353)">クレール フォックス</span></div>
<div class="t" style="left:266.3px;top:552.8px;font-size:15.4px;color:#111;font-family:'DejaVu Sans','Noto Sans CJK JP',sans-serif;"><span id="t103" style="--w:59.00;transform:scaleX(0.9269)">$13,275</span></div>
<div class="t" style="left:437.6px;top:552.8px;font-size:15.4px;color:#111;font-family:'DejaVu Sans','Noto Sans CJK JP',sans-serif;"><span id="t104" style="--w:9.70;transform:scaleX(0.9901)">5</span></div>
<div class="t" style="left:38.3px;top:577.8px;font-size:16.43px;color:#111;font-family:'DejaVu Sans','Noto Sans CJK JP',sans-serif;"><span id="t105" style="--w:124.20;transform:scaleX(0.9850)">ローズマリー コブ</span></div>
<div class="t" style="left:276.2px;top:577.8px;font-size:15.4px;color:#111;font-family:'DejaVu Sans','Noto Sans CJK JP',sans-serif;"><span id="t106" style="--w:49.10;transform:scaleX(0.9116)">$9,100</span></div>
<div class="t" style="left:437.6px;top:577.8px;font-size:15.4px;color:#111;font-family:'DejaVu Sans','Noto Sans CJK JP',sans-serif;"><span id="t107" style="--w:9.70;transform:scaleX(0.9901)">3</span></div>
<div class="t" style="left:38.3px;top:603.3px;font-size:16.43px;color:#111;font-family:'DejaVu Sans','Noto Sans CJK JP',sans-serif;"><span id="t108" style="--w:94.20;transform:scaleX(1.0031)">ロリー チェン</span></div>
<div class="t" style="left:276.2px;top:603.3px;font-size:15.4px;color:#111;font-family:'DejaVu Sans','Noto Sans CJK JP',sans-serif;"><span id="t109" style="--w:49.10;transform:scaleX(0.9116)">$7,480</span></div>
<div class="t" style="left:437.6px;top:603.3px;font-size:15.4px;color:#111;font-family:'DejaVu Sans','Noto Sans CJK JP',sans-serif;"><span id="t110" style="--w:9.70;transform:scaleX(0.9901)">4</span></div>
<div style="position:absolute;left:350px;top:271px;width:324px;height:147px;background:#fff;border:1px solid #70ad47"></div>
<div class="t" style="left:361.0px;top:278.5px;font-size:10.0px;color:#111;font-family:'Noto Sans CJK JP',sans-serif;"><span id="t111" style="--w:0.00;transform:scaleX(1.0000)">●</span></div>
<div class="t" style="left:373.0px;top:278.0px;font-size:13.86px;color:#111;font-family:'Liberation Sans','Noto Sans CJK JP',sans-serif;"><span id="t112" style="--w:216.00;transform:scaleX(0.9640)">営業担当者が手数料を回収するには、</span></div>
<div class="t" style="left:373.0px;top:305.0px;font-size:13.3px;color:#111;font-family:'Liberation Sans','Noto Sans CJK JP',sans-serif;"><span id="t113" style="--w:52.50;transform:scaleX(0.9871)">売上目標</span></div>
<div class="t" style="left:429.5px;top:305.0px;font-size:14.9px;color:#f30b0b;font-family:'Liberation Sans','Noto Sans CJK JP',sans-serif;"><span id="t114" style="--w:40.50;transform:scaleX(0.9456)"><u>または</u></span></div>
<div class="t" style="left:472.5px;top:305.0px;font-size:14.26px;color:#111;font-family:'Liberation Sans','Noto Sans CJK JP',sans-serif;"><span id="t115" style="--w:131.50;transform:scaleX(0.9681)">取引目標のどちらかを</span></div>
<div class="t" style="left:373.0px;top:330.0px;font-size:14.17px;color:#111;font-family:'Liberation Sans','Noto Sans CJK JP',sans-serif;"><span id="t116" style="--w:139.00;transform:scaleX(0.9913)">上回る必要があります。</span></div>
<div class="t" style="left:361.0px;top:357.3px;font-size:10.0px;color:#111;font-family:'Noto Sans CJK JP',sans-serif;"><span id="t117" style="--w:0.00;transform:scaleX(1.0000)">●</span></div>
<div class="t" style="left:373.0px;top:356.8px;font-size:14.19px;color:#111;font-family:'Liberation Sans','Noto Sans CJK JP',sans-serif;"><span id="t118" style="--w:231.00;transform:scaleX(0.9594)">営業担当者がボーナスを獲得するには、</span></div>
<div class="t" style="left:373.0px;top:382.0px;font-size:13.91px;color:#111;font-family:'Liberation Sans','Noto Sans CJK JP',sans-serif;"><span id="t119" style="--w:278.70;transform:scaleX(0.9890)">売上目標 と 取引目標を上回る必要があります。</span></div>
<div style="position:absolute;left:915px;top:216px;width:15px;height:447px;background:#dcdcdc;background-image:radial-gradient(#cfcfcf 0.6px,transparent 0.7px);background-size:2px 2px;"></div>
<div style="position:absolute;left:915px;top:216px;width:13px;height:13px;background:#fff;border:1px solid #c6c6c6"></div>
<div style="position:absolute;left:915px;top:230px;width:13px;height:332px;background:#fff;border:1px solid #c6c6c6"></div>
<div style="position:absolute;left:915px;top:648px;width:13px;height:13px;background:#fff;border:1px solid #c6c6c6"></div>
<div style="position:absolute;left:1px;top:662px;width:932px;height:28px;background:#e6e6e6;"></div>
<div style="position:absolute;left:1px;top:662px;width:912px;height:1px;background:#a0a0a0;"></div>
<div style="position:absolute;left:101px;top:662px;width:72px;height:23px;background:#fff;border-left:1px solid #ababab;border-right:1px solid #ababab;border-bottom:2px solid #217346"></div>
<div class="t" style="left:115.5px;top:665.8px;font-size:13.65px;color:#217346;font-family:'DejaVu Sans','Noto Sans CJK JP',sans-serif;"><span id="t120" style="--w:44.00;transform:scaleX(0.9143)">Sheet1</span></div>
<div style="position:absolute;left:577px;top:669px;width:335px;height:15px;background:#dcdcdc;background-image:radial-gradient(#cfcfcf 0.6px,transparent 0.7px);background-size:2px 2px;"></div>
<div style="position:absolute;left:577px;top:669px;width:13px;height:13px;background:#fff;border:1px solid #c6c6c6"></div>
<div style="position:absolute;left:591px;top:669px;width:265px;height:13px;background:#fff;border:1px solid #c6c6c6"></div>
<div style="position:absolute;left:897px;top:669px;width:13px;height:13px;background:#fff;border:1px solid #c6c6c6"></div>
<div style="position:absolute;left:1px;top:690px;width:932px;height:22px;background:#f3f2f1;"></div>
<div style="position:absolute;left:1px;top:689px;width:932px;height:1px;background:#ececec;"></div>
<div style="position:absolute;left:616px;top:691px;width:40px;height:21px;background:#c8c8c8;"></div>
<div class="t" style="left:10.0px;top:691.0px;font-size:12.5px;color:#444;font-family:'Liberation Sans','Noto Sans CJK JP',sans-serif;"><span id="t121" style="--w:47.50;transform:scaleX(0.9497)">準備完了</span></div>
<div class="t" style="left:881.6px;top:692.0px;font-size:12.5px;color:#444;font-family:'Liberation Sans','Noto Sans CJK JP',sans-serif;"><span id="t122" style="--w:31.60;transform:scaleX(0.9880)">100%</span></div>
<svg class="L" width="934" height="713" viewBox="0 0 934 713">
<path d="M918 225.500h8l-4-4.500zM918 652.500h8l-4 4.500zM587 671.500v8l-4.500-4zM901.500 671.500v8l4.500-4z" fill="#606060"/>
<path d="M32 671.500v7l-3.500-3.500zM56 671.500v7l3.500-3.500z" fill="#c2c2c2"/>
<circle cx="214.500" cy="675.500" r="7" fill="none" stroke="#666" stroke-width="1.100"/><path d="M210.500 675.500h8m-4-4v8" stroke="#666" stroke-width="1.300"/>
<g fill="#9a9a9a"><rect x="559.500" y="670" width="1.500" height="1.500"/><rect x="559.500" y="674" width="1.500" height="1.500"/><rect x="559.500" y="678" width="1.500" height="1.500"/></g>
<g fill="none" stroke="#444" stroke-width="1.100"><path d="M83 706.500h-6.500v-11h12.500v4"/><path d="M76.500 698h12.500"/><path d="M78.500 700.500h3m-3 2.500h2.500" stroke-width="1"/><circle cx="86.300" cy="703.300" r="3.700" fill="#f3f2f1"/></g><circle cx="86.300" cy="703.300" r="2" fill="#444"/>
<g fill="none" stroke="#333" stroke-width="1.400"><rect x="629" y="694.500" width="13" height="12"/><path d="M629 698.500h13m-13 4h13m-8.700-8v12m4.400-12v12"/></g>
<g fill="none" stroke="#444" stroke-width="1.100"><rect x="669.500" y="694.500" width="13" height="12"/><rect x="672.500" y="697" width="7" height="7.500"/><path d="M674 699h4m-4 1.800h4m-4 1.800h4" stroke-width=".8"/></g>
<g fill="none" stroke="#444" stroke-width="1.100"><rect x="709.500" y="694.500" width="13" height="12"/><path d="M709.500 701.500h8.500v-7m-4 0v7"/></g>
<path d="M741.500 701.500h7M858.500 701.500h9m-4.500-4.500v9" stroke="#555" stroke-width="1.200"/><path d="M755.500 701.500h99" stroke="#9a9a9a" stroke-width="1"/><rect x="802.800" y="696" width="4.700" height="11" fill="#6a6a6a"/>
</svg>
<div style="position:absolute;left:169px;top:92px;width:149px;height:341px;background:#fff;border:1px solid #c6c6c6;box-shadow:0 1px 2px rgba(0,0,0,.06)"></div>
<div style="position:absolute;left:171px;top:150px;width:147px;height:28px;background:#c6c6c6;"></div>
<div class="t" style="left:208.0px;top:98.3px;font-size:12.6px;color:#666;font-family:'DejaVu Sans','Noto Sans CJK JP',sans-serif;"><span id="t123" style="--w:26.00;transform:scaleX(0.9375)">AND</span></div>
<div class="t" style="left:208.0px;top:126.3px;font-size:12.6px;color:#666;font-family:'DejaVu Sans','Noto Sans CJK JP',sans-serif;"><span id="t124" style="--w:37.50;transform:scaleX(0.9954)">FALSE</span></div>
<div class="t" style="left:208.0px;top:154.3px;font-size:12.6px;color:#333;font-family:'DejaVu Sans','Noto Sans CJK JP',sans-serif;"><span id="t125" style="--w:12.00;transform:scaleX(1.0940)">IF</span></div>
<div class="t" style="left:208.0px;top:182.3px;font-size:12.6px;color:#666;font-family:'DejaVu Sans','Noto Sans CJK JP',sans-serif;"><span id="t126" style="--w:52.00;transform:scaleX(0.9438)">IFERROR</span></div>
<div class="t" style="left:208.0px;top:210.3px;font-size:12.6px;color:#666;font-family:'DejaVu Sans','Noto Sans CJK JP',sans-serif;"><span id="t127" style="--w:29.50;transform:scaleX(1.0172)">IFNA</span></div>
<div class="t" style="left:208.0px;top:238.3px;font-size:12.6px;color:#666;font-family:'DejaVu Sans','Noto Sans CJK JP',sans-serif;"><span id="t128" style="--w:20.50;transform:scaleX(1.0942)">IFS</span></div>
<div class="t" style="left:208.0px;top:266.3px;font-size:12.6px;color:#666;font-family:'DejaVu Sans','Noto Sans CJK JP',sans-serif;"><span id="t129" style="--w:26.00;transform:scaleX(0.9618)">NOT</span></div>
<div class="t" style="left:208.0px;top:294.3px;font-size:12.6px;color:#666;font-family:'DejaVu Sans','Noto Sans CJK JP',sans-serif;"><span id="t130" style="--w:18.00;transform:scaleX(0.9640)">OR</span></div>
<div class="t" style="left:208.0px;top:322.3px;font-size:12.6px;color:#666;font-family:'DejaVu Sans','Noto Sans CJK JP',sans-serif;"><span id="t131" style="--w:50.50;transform:scaleX(1.0225)">SWITCH</span></div>
<div class="t" style="left:208.0px;top:350.3px;font-size:12.6px;color:#666;font-family:'DejaVu Sans','Noto Sans CJK JP',sans-serif;"><span id="t132" style="--w:32.50;transform:scaleX(0.9665)">TRUE</span></div>
<div class="t" style="left:208.0px;top:378.3px;font-size:12.6px;color:#666;font-family:'DejaVu Sans','Noto Sans CJK JP',sans-serif;"><span id="t133" style="--w:25.50;transform:scaleX(0.9623)">XOR</span></div>
<div style="position:absolute;left:171px;top:403px;width:147px;height:1px;background:#e1e1e1;"></div>
<div class="t" style="left:208.0px;top:409.8px;font-size:12.64px;color:#333;font-family:'Liberation Sans','Noto Sans CJK JP',sans-serif;"><span id="t134" style="--w:86.50;transform:scaleX(0.9683)">関数の挿入(<u>F</u>)...</span></div>
<div class="t" style="left:184.5px;top:408.0px;font-size:16px;color:#333;font-family:'Liberation Serif','Noto Serif CJK SC',serif;font-style:italic;"><span id="t135" style="--w:6.50;transform:scaleX(1.4596)">f</span></div>
<div class="t" style="left:190.5px;top:410.5px;font-size:12px;color:#333;font-family:'Liberation Serif','Noto Serif CJK SC',serif;font-style:italic;"><span id="t136" style="--w:7.50;transform:scaleX(1.4076)">x</span></div>
<div style="position:absolute;left:261px;top:185px;width:231px;height:98px;background:#fff;border:1px solid #bebebe;box-shadow:0 1px 2px rgba(0,0,0,.07)"></div>
<div class="t" style="left:273.5px;top:191.2px;font-size:12.79px;color:#505050;font-family:'Liberation Sans','Noto Sans CJK JP',sans-serif;font-weight:700;"><span id="t137" style="--w:208.00;transform:scaleX(0.9530)">IF(論理式,値が真の場合,値が偽の場合)</span></div>
<div class="t" style="left:273.5px;top:215.6px;font-size:13.05px;color:#5e5e5e;font-family:'Liberation Sans','Noto Sans CJK JP',sans-serif;"><span id="t138" style="--w:199.00;transform:scaleX(0.8832)">論理式の結果 (真または偽) に応じて、指</span></div>
<div class="t" style="left:273.5px;top:230.9px;font-size:13.55px;color:#5e5e5e;font-family:'Liberation Sans','Noto Sans CJK JP',sans-serif;"><span id="t139" style="--w:100.50;transform:scaleX(0.7857)">定された値を返します</span></div>
<div style="position:absolute;left:266px;top:253px;width:222px;height:1px;background:#e1e1e1;"></div>
<div class="t" style="left:295.5px;top:260.3px;font-size:12.5px;color:#2a5f9e;font-family:'Liberation Sans','Noto Sans CJK JP',sans-serif;font-weight:700;"><span id="t140" style="--w:48.00;transform:scaleX(0.9597)">詳細情報</span></div>
<svg class="L" width="934" height="713" viewBox="0 0 934 713">
<circle cx="280" cy="269" r="7" fill="none" stroke="#2e94d6" stroke-width="1.400"/>
<path d="M261.500 165.500v16.500l3.800-3.600 2.800 6.200 2.500-1.100-2.800-6h5.200z" fill="#fff" stroke="#111" stroke-width="1.100" stroke-linejoin="round"/>
</svg>
<div class="t" style="left:276.8px;top:259.8px;font-size:12.0px;color:#2e94d6;font-family:'Liberation Sans','Noto Sans CJK JP',sans-serif;"><span id="t141" style="--w:6.80;transform:scaleX(1.0168)">?</span></div>
<div style="position:absolute;left:0px;top:35px;width:1px;height:678px;background:#217346;"></div>
<div style="position:absolute;left:932px;top:35px;width:1px;height:678px;background:rgba(33,115,70,.55);"></div>
<div style="position:absolute;left:933px;top:35px;width:1px;height:678px;background:#217346;"></div>
<div style="position:absolute;left:0px;top:711px;width:934px;height:1px;background:rgba(33,115,70,.6);"></div>
<div style="position:absolute;left:0px;top:712px;width:934px;height:1px;background:#217346;"></div>
<script>
(function(){try{var a=document.querySelectorAll('.t>span');for(var i=0;i<a.length;i++){var e=a[i],w=parseFloat(e.style.getPropertyValue('--w'));if(!(w>0))continue;var o=e.style.transform;e.style.transform='none';var n=e.getBoundingClientRect().width;e.style.transform=(n>0)?'scaleX('+(w/n).toFixed(4)+')':o;}}catch(x){}})();
</script>
</body></html>
